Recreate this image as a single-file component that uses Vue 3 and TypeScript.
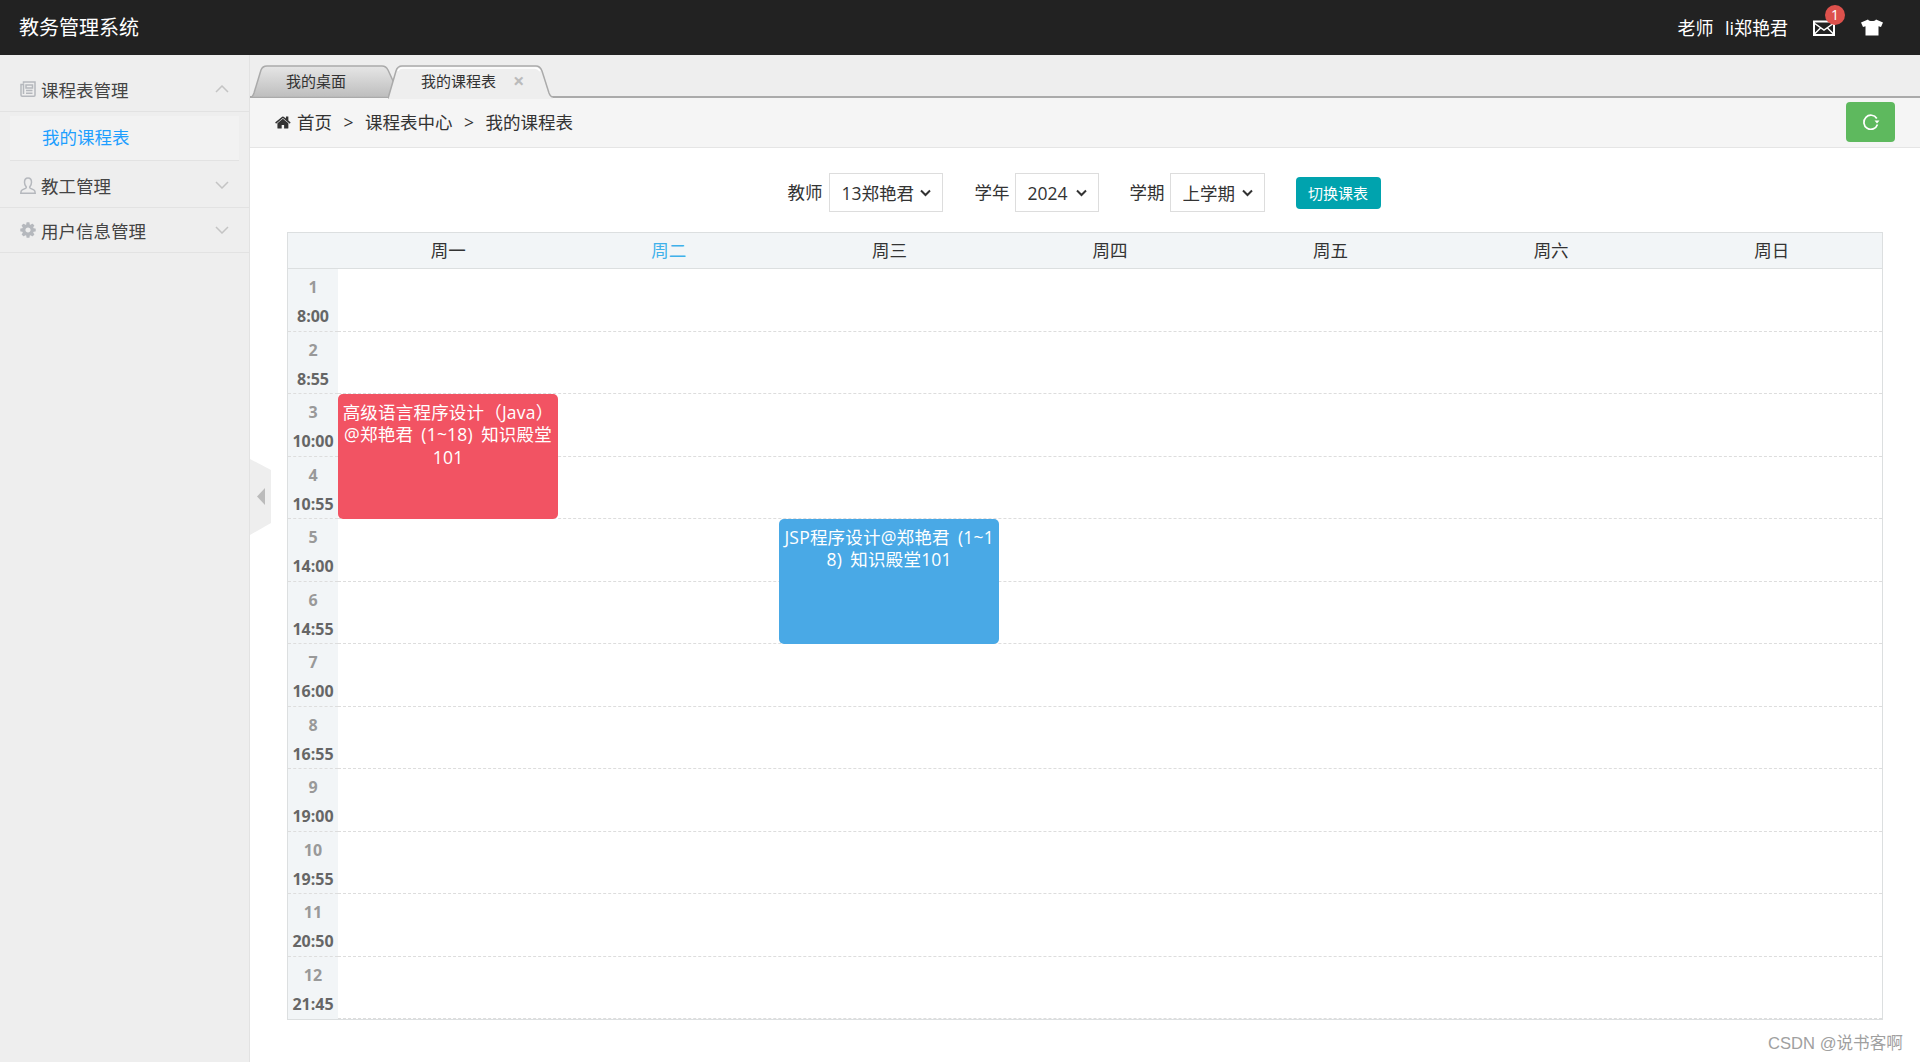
<template>
  <div class="page">
    <header class="topbar">
      <div class="topbar__title">教务管理系统</div>
      <div class="topbar__user">
        <span class="topbar__role">老师</span>
        <span class="topbar__name">li郑艳君</span>
        <span class="topbar__mail">
          <svg width="22" height="16" viewBox="0 0 22 16" fill="none" stroke="#fff" stroke-width="2">
            <rect x="1" y="1.500" width="20" height="13.500" />
            <path d="M1 3l10 7 10-7M1 14.500l7-7M21 14.500l-7-7" stroke-width="1.500" />
          </svg>
          <i class="topbar__badge">1</i>
        </span>
        <svg class="topbar__shirt" width="22" height="17" viewBox="0 0 22 17" fill="#fff">
          <path d="M7 0.500C8 2.500 14 2.500 15 0.500L22 3.500L20 8L17.500 7.200V16.500H4.500V7.200L2 8L0 3.500Z" />
        </svg>
      </div>
    </header>

    <div class="layout">
      <aside class="sidebar">
        <div class="menu">
          <div class="menu__title">
            <svg class="menu__icon" width="16" height="16" viewBox="0 0 16 16" fill="none" stroke="#b5b8bd" stroke-width="1.500">
              <path d="M3.500 2.500V1h11.500v13.200a1 1 0 0 1-1 1H2.200A1.200 1.200 0 0 1 1 14V3.500h2.500V13" />
              <path d="M6 4h6.500v3H6zM6 9.500h6.500M6 12.200h6.500" />
            </svg>
            <span>课程表管理</span>
            <svg class="menu__arrow" width="14" height="8" viewBox="0 0 14 8" fill="none" stroke="#c4c4c4" stroke-width="1.500">
              <path d="M1 7l6-6 6 6" />
            </svg>
          </div>
          <div class="menu__panel"><a class="menu__link">我的课程表</a></div>
        </div>
        <div class="menu">
          <div class="menu__title">
            <svg class="menu__icon" width="16" height="17" viewBox="0 0 16 17" fill="none" stroke="#b5b8bd" stroke-width="1.500">
              <path d="M8 1c2.200 0 3.500 1.800 3.500 4.300 0 1.800-.7 3.200-1.500 4.200-.5.700-.3 1.500.5 1.900l3.300 1.500c1 .5 1.400 1.200 1.400 3.300H.8c0-2.100.4-2.800 1.400-3.300l3.300-1.500c.8-.4 1-1.200.5-1.900-.8-1-1.500-2.400-1.500-4.200C4.500 2.800 5.800 1 8 1z" />
            </svg>
            <span>教工管理</span>
            <svg class="menu__arrow" width="14" height="8" viewBox="0 0 14 8" fill="none" stroke="#c4c4c4" stroke-width="1.500">
              <path d="M1 1l6 6 6-6" />
            </svg>
          </div>
        </div>
        <div class="menu">
          <div class="menu__title">
            <svg class="menu__icon menu__icon--gear" width="18" height="18" viewBox="0 0 1792 1792" fill="#b5b8bd">
              <path d="M1152 896q0-106-75-181t-181-75-181 75-75 181 75 181 181 75 181-75 75-181zm512-109v222q0 12-8 23t-20 13l-185 28q-19 54-39 91 35 50 107 138 10 12 10 25t-9 23q-27 37-99 108t-94 71q-12 0-26-9l-138-108q-44 23-91 38-16 136-29 186-7 28-36 28h-222q-14 0-24.500-8.500t-11.500-21.500l-28-184q-49-16-90-37l-141 107q-10 9-25 9-14 0-25-11-126-114-165-168-7-10-7-23 0-12 8-23 15-21 51-66.500t54-70.500q-27-50-41-99l-183-27q-13-2-21-12.500t-8-23.500v-222q0-12 8-23t19-13l186-28q14-46 39-92-40-57-107-138-10-12-10-24 0-10 9-23 26-36 98.500-107.500t94.500-71.500q13 0 26 10l138 107q44-23 91-38 16-136 29-186 7-28 36-28h222q14 0 24.500 8.500t11.500 21.500l28 184q49 16 90 37l142-107q9-9 24-9 13 0 25 10 129 119 165 170 7 8 7 22 0 12-8 23-15 21-51 66.500t-54 70.500q26 50 41 98l183 28q13 2 21 12.500t8 23.500z" />
            </svg>
            <span>用户信息管理</span>
            <svg class="menu__arrow" width="14" height="8" viewBox="0 0 14 8" fill="none" stroke="#c4c4c4" stroke-width="1.500">
              <path d="M1 1l6 6 6-6" />
            </svg>
          </div>
        </div>
      </aside>

      <main class="main">
        <div class="collapse">
          <svg width="22" height="76" viewBox="0 0 22 76">
            <path d="M0 0L21 11V64L0 76Z" fill="#eee" />
            <path d="M15 29V46L7 37.500Z" fill="#bbb" />
          </svg>
        </div>

        <div class="tabs">
          <div class="tab tab--first">
            <svg class="tab__bg" width="144" height="33" viewBox="0 0 144 33">
              <defs>
                <linearGradient id="tabOff" x1="0" y1="0" x2="0" y2="1">
                  <stop offset="0" stop-color="#e6e6e6" />
                  <stop offset="1" stop-color="#bdbdbd" />
                </linearGradient>
              </defs>
              <path d="M0 32.500C2 32.500 3 31 4 28L11 5Q12.500 1 17 1L132 1Q136 1 138 5L144 18L139 32.500Z" fill="url(#tabOff)" stroke="#aaa" stroke-width="1.500" />
            </svg>
            <span class="tab__text">我的桌面</span>
          </div>
          <div class="tab tab--active">
            <svg class="tab__bg" width="165" height="34" viewBox="0 0 165 34">
              <path d="M0 34L8 6Q9.500 1 14 1L148 1Q152 1 154 6L161 28Q162.500 32 165 32V34Z" fill="#eee" />
              <path d="M0 33.500L8 6Q9.500 1 14 1L148 1Q152 1 154 6L161 28Q162.500 32 165 32" fill="none" stroke="#aaa" stroke-width="1.500" />
              <path d="M10 6Q11 3 15 3L147 3Q150 3 152 6" fill="none" stroke="#fff" stroke-width="1.500" />
            </svg>
            <span class="tab__text">我的课程表</span>
            <span class="tab__close">×</span>
          </div>
        </div>

        <div class="crumbs">
          <svg class="crumbs__home" width="17" height="17" viewBox="0 0 1792 1792" fill="#333">
            <path d="M1408 992v480q0 26-19 45t-45 19h-384v-384h-256v384h-384q-26 0-45-19t-19-45v-480q0-1 .5-3t.5-3l575-474 575 474q1 2 1 6zm223-69l-62 74q-8 9-21 11h-3q-13 0-21-7l-692-577-692 577q-12 8-24 7-13-2-21-11l-62-74q-8-10-7-23.500t11-21.500l719-599q32-26 76-26t76 26l244 204v-195q0-14 9-23t23-9h192q14 0 23 9t9 23v408l219 182q10 8 11 21.500t-7 23.500z" />
          </svg>
          <template v-for="(item, i) in crumbs" :key="item">
            <span v-if="i > 0" class="crumbs__sep">&gt;</span>
            <span class="crumbs__item">{{ item }}</span>
          </template>
          <button class="crumbs__refresh">
            <svg width="18" height="18" viewBox="0 0 18 18" fill="none" stroke="#fff" stroke-width="1.700">
              <path d="M14.800 5.500A7 7 0 1 0 15.500 11.500" />
              <path d="M12.500 7.500H17.500L15 10.500Z" fill="#fff" stroke="none" />
            </svg>
          </button>
        </div>

        <div class="content">
          <div class="filters">
            <label class="filters__label filters__label--first">教师</label>
            <span class="filters__field">
              <select class="filters__select filters__select--teacher">
                <option>13郑艳君</option>
              </select>
              <svg class="filters__chevron" width="11" height="8" viewBox="0 0 11 8" fill="none" stroke="#333" stroke-width="2">
                <path d="M1 1.500l4.500 4.500 4.500-4.500" />
              </svg>
            </span>
            <label class="filters__label filters__label--second">学年</label>
            <span class="filters__field">
              <select class="filters__select filters__select--year">
                <option>2024</option>
              </select>
              <svg class="filters__chevron" width="11" height="8" viewBox="0 0 11 8" fill="none" stroke="#333" stroke-width="2">
                <path d="M1 1.500l4.500 4.500 4.500-4.500" />
              </svg>
            </span>
            <label class="filters__label filters__label--third">学期</label>
            <span class="filters__field">
              <select class="filters__select filters__select--term">
                <option>上学期</option>
              </select>
              <svg class="filters__chevron" width="11" height="8" viewBox="0 0 11 8" fill="none" stroke="#333" stroke-width="2">
                <path d="M1 1.500l4.500 4.500 4.500-4.500" />
              </svg>
            </span>
            <button class="filters__btn">切换课表</button>
          </div>

          <div class="timetable">
            <div class="timetable__corner"></div>
            <div
              v-for="(day, i) in days"
              :key="day"
              class="timetable__day"
              :class="{ 'timetable__day--today': i === 1 }"
            >
              {{ day }}
            </div>

            <template v-for="(time, i) in times" :key="time">
              <div class="timetable__time" :class="{ 'timetable__time--last': i === 11 }">
                <span class="timetable__num">{{ i + 1 }}</span>
                <span class="timetable__clock">{{ time }}</span>
              </div>
              <div
                class="timetable__lane"
                :class="{ 'timetable__lane--last': i === 11 }"
                :style="{ gridRow: i + 2 }"
              ></div>
            </template>

            <div
              v-for="c in courses"
              :key="c.text"
              class="timetable__course"
              :style="{
                gridColumn: c.day + 1,
                gridRow: `${c.from + 1} / span ${c.span}`,
                background: c.color
              }"
            >
              {{ c.text }}
            </div>
          </div>
        </div>
      </main>
    </div>

    <div class="watermark">CSDN @说书客啊</div>
  </div>
</template>

<script setup lang="ts">
interface Course {
  text: string
  day: number
  from: number
  span: number
  color: string
}

const crumbs = ['首页', '课程表中心', '我的课程表']
const days = ['周一', '周二', '周三', '周四', '周五', '周六', '周日']
const times = [
  '8:00', '8:55', '10:00', '10:55', '14:00', '14:55',
  '16:00', '16:55', '19:00', '19:55', '20:50', '21:45'
]

const courses: Course[] = [
  { text: '高级语言程序设计（Java）@郑艳君 (1~18) 知识殿堂101', day: 1, from: 3, span: 2, color: '#f25363' },
  { text: 'JSP程序设计@郑艳君 (1~18) 知识殿堂101', day: 3, from: 5, span: 2, color: '#49a9e6' }
]
</script>

<style>
html,
body {
  margin: 0;
  height: 100%;
  overflow: hidden;
  background: #fff;
}
</style>

<style scoped>
.page {
  position: relative;
  height: 1062px;
  display: flex;
  flex-direction: column;
  font-family: "Open Sans", "Noto Sans CJK SC", sans-serif;
  font-size: 17.5px;
  color: #333;
}

.topbar {
  height: 55px;
  flex: none;
  background: #222;
  color: #fff;
  display: flex;
  align-items: center;
  justify-content: space-between;
  padding: 0 37px 0 19px;
}

.topbar__title {
  font-size: 20px;
  margin-top: -2px;
}

.topbar__user {
  display: flex;
  align-items: center;
  font-size: 18px;
}

.topbar__role,
.topbar__name {
  margin-top: -2px;
}

.topbar__name {
  margin-left: 11.500px;
}

.topbar__mail {
  position: relative;
  display: flex;
  margin-left: 25px;
}

.topbar__badge {
  position: absolute;
  left: 12px;
  top: -15px;
  width: 20px;
  height: 20px;
  border-radius: 50%;
  background: #dd514c;
  font-style: normal;
  font-size: 14px;
  line-height: 20px;
  text-align: center;
}

.topbar__shirt {
  margin-left: 26px;
}

.layout {
  flex: 1;
  display: flex;
  min-height: 0;
}

.sidebar {
  width: 250px;
  flex: none;
  box-sizing: border-box;
  background: #eee;
  border-right: 1px solid #e2e2e2;
  padding-top: 12px;
  color: #444;
}

.menu {
  border-bottom: 1px solid #e2e2e2;
}

.menu:first-child {
  border-bottom: none;
}

.menu:first-child .menu__title {
  border-bottom: 1px solid #e2e2e2;
}

.menu__title {
  height: 44px;
  display: flex;
  align-items: center;
  padding-left: 20px;
}

.menu__icon {
  flex: none;
  margin-right: 5px;
}

.menu__icon--gear {
  margin-left: -1px;
  margin-right: 4px;
}

.menu__arrow {
  margin-left: auto;
  margin-right: 20px;
}

.menu__panel {
  margin: 4px 10px 2px;
  height: 45px;
  box-sizing: border-box;
  background: #f2f2f2;
  border-bottom: 1px solid #e2e2e2;
  display: flex;
  align-items: center;
}

.menu__link {
  margin-left: 32px;
  margin-top: -3px;
  color: #1e9fff;
}

.main {
  position: relative;
  flex: 1;
  min-width: 0;
  display: flex;
  flex-direction: column;
}

.collapse {
  position: absolute;
  left: 0;
  top: 404px;
  display: flex;
}

.tabs {
  height: 43px;
  flex: none;
  box-sizing: border-box;
  background: #eee;
  border-bottom: 2px solid #aaa;
  display: flex;
  align-items: flex-start;
  padding-top: 10px;
}

.tab {
  position: relative;
  height: 33px;
  font-size: 15px;
  display: flex;
  align-items: center;
}

.tab--first {
  width: 144px;
  padding: 0 0 2px 36px;
  box-sizing: border-box;
}

.tab--active {
  width: 165px;
  height: 34px;
  margin-left: -6px;
  padding: 0 0 3px 33px;
  box-sizing: border-box;
}

.tab__bg {
  position: absolute;
  left: 0;
  top: 0;
}

.tab__text {
  position: relative;
}

.tab__close {
  position: relative;
  margin-left: 17px;
  font-size: 20px;
  font-weight: 700;
  line-height: 1;
  color: #bbb;
}

.crumbs {
  height: 50px;
  flex: none;
  box-sizing: border-box;
  background: #f5f5f5;
  border-bottom: 1px solid #e5e5e5;
  display: flex;
  align-items: center;
  padding: 0 25px;
}

.crumbs__home {
  margin-right: 5px;
}

.crumbs__item {
  margin-top: -2px;
}

.crumbs__sep {
  margin: -2px 11.500px 0;
}

.crumbs__refresh {
  margin-left: auto;
  margin-top: -1px;
  width: 49px;
  height: 40px;
  border: none;
  border-radius: 4px;
  background: #5eb95e;
  display: flex;
  align-items: center;
  justify-content: center;
  padding: 0;
}

.content {
  flex: 1;
  padding: 25px 37px 0;
}

.filters {
  height: 39px;
  display: flex;
  align-items: center;
  justify-content: center;
  margin-bottom: 20px;
  padding-right: 2px;
}

.filters__label {
  margin-right: 5px;
  margin-top: -3px;
}

.filters__label--first {
  margin-right: 6px;
}

.filters__label--second {
  margin-left: 32px;
}

.filters__label--third {
  margin-left: 31px;
}

.filters__field {
  position: relative;
  display: flex;
}

.filters__select {
  height: 39px;
  box-sizing: border-box;
  appearance: none;
  border: 1px solid #ddd;
  border-radius: 0;
  background: #fff;
  color: #333;
  font: inherit;
  padding: 0 0 0 12px;
}

.filters__chevron {
  position: absolute;
  right: 12px;
  top: 16px;
  pointer-events: none;
}

.filters__select--teacher {
  width: 114px;
}

.filters__select--year {
  width: 84px;
}

.filters__select--term {
  width: 95px;
}

.filters__btn {
  margin-left: 31px;
  width: 85px;
  height: 32px;
  border: none;
  border-radius: 4px;
  background: #00a3ae;
  color: #fff;
  font: inherit;
  font-size: 15px;
  padding: 0;
}

.timetable {
  display: grid;
  grid-template-columns: 50px repeat(7, 1fr);
  grid-template-rows: 36px repeat(12, 62.5px);
  border: 1px solid #dcdfe0;
}

.timetable__corner,
.timetable__day {
  background: #f2f5f7;
  border-bottom: 1px solid #dcdfe0;
}

.timetable__day {
  display: flex;
  align-items: center;
  justify-content: center;
  padding-bottom: 3px;
  box-sizing: border-box;
}

.timetable__day--today {
  color: #3fb1ea;
}

.timetable__time {
  grid-column: 1;
  box-sizing: border-box;
  background: #f2f5f7;
  border-bottom: 1px dashed #ddd;
  padding-top: 4px;
  display: flex;
  flex-direction: column;
  align-items: center;
  font-size: 16px;
  font-weight: 700;
  line-height: 29px;
}

.timetable__time--last,
.timetable__lane--last {
  border-bottom: none;
}

.timetable__num {
  color: #999;
}

.timetable__clock {
  color: #666;
}

.timetable__lane {
  grid-column: 2 / -1;
  box-sizing: border-box;
  border-bottom: 1px dashed #ddd;
}

.timetable__course {
  margin-right: 0.500px;
  padding: 6.500px 4px 4px;
  border-radius: 5px;
  box-sizing: border-box;
  color: #fff;
  line-height: 22.500px;
  letter-spacing: 0.200px;
  word-spacing: 3.500px;
  text-align: center;
  word-break: break-all;
  z-index: 1;
}

.watermark {
  position: absolute;
  left: 1768px;
  top: 1034px;
  font-family: "Liberation Sans", "Noto Sans CJK SC", sans-serif;
  font-size: 16.600px;
  line-height: 20px;
  color: #a0a0a0;
  white-space: nowrap;
}
</style>
